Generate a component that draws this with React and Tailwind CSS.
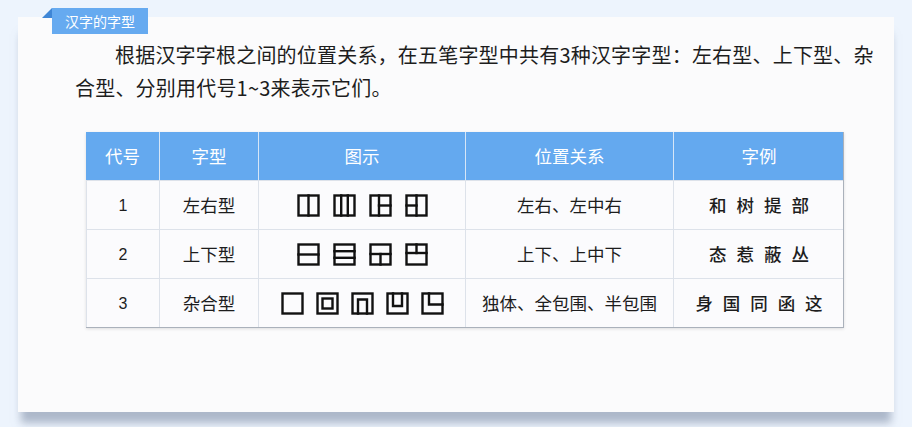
const font = { fontFamily: '"Noto Sans CJK SC", "Noto Sans", sans-serif' };

const Box = ({ children }) => (
  <svg width="23" height="23" viewBox="0 0 23 23" fill="none" stroke="#111" strokeWidth="2.4" strokeLinecap="square">
    <rect x="1.5" y="1.5" width="20" height="20" />
    {children}
  </svg>
);

const icons = {
  1: [
    <Box key="a"><line x1="11.5" y1="1.5" x2="11.5" y2="21.5" /></Box>,
    <Box key="b"><line x1="8.2" y1="1.5" x2="8.2" y2="21.5" /><line x1="14.8" y1="1.5" x2="14.8" y2="21.5" /></Box>,
    <Box key="c"><line x1="10" y1="1.5" x2="10" y2="21.5" /><line x1="10" y1="11.5" x2="21.5" y2="11.5" /></Box>,
    <Box key="d"><line x1="11.5" y1="1.5" x2="11.5" y2="21.5" /><line x1="1.5" y1="11.5" x2="11.5" y2="11.5" /></Box>,
  ],
  2: [
    <Box key="a"><line x1="1.5" y1="11.5" x2="21.5" y2="11.5" /></Box>,
    <Box key="b"><line x1="1.5" y1="8.2" x2="21.5" y2="8.2" /><line x1="1.5" y1="14.8" x2="21.5" y2="14.8" /></Box>,
    <Box key="c"><line x1="1.5" y1="11" x2="21.5" y2="11" /><line x1="11.5" y1="11" x2="11.5" y2="21.5" /></Box>,
    <Box key="d"><line x1="1.5" y1="10" x2="21.5" y2="10" /><line x1="11.5" y1="1.5" x2="11.5" y2="10" /></Box>,
  ],
  3: [
    <Box key="a" />,
    <Box key="b"><rect x="6.5" y="6.5" width="10" height="10" /></Box>,
    <Box key="c"><polyline points="7,21.5 7,7.5 16,7.5 16,21.5" /></Box>,
    <Box key="d"><polyline points="7,1.5 7,14 16,14 16,1.5" /></Box>,
    <Box key="e"><polyline points="8,1.5 8,12.5 21.5,12.5" /></Box>,
  ],
};

const rows = [
  { no: '1', type: '左右型', rel: '左右、左中右', ex: '和 树 提 部' },
  { no: '2', type: '上下型', rel: '上下、上中下', ex: '态 惹 蔽 丛' },
  { no: '3', type: '杂合型', rel: '独体、全包围、半包围', ex: '身 国 同 函 这' },
];

const cols = 'grid grid-cols-[73px_99px_207px_208px_171px]';

export default function App() {
  return (
    <div className="w-[912px] h-[427px] bg-[#edf4fd] pt-[17px] pl-[18px] overflow-hidden" style={font}>
      <div className="relative w-[876px] h-[395px] bg-[#fbfbfc] shadow-[0_14px_8px_-3px_rgba(120,135,160,0.55)] pt-[21px] pl-[57px] pr-[6px]">
        <div className="absolute left-[24px] top-[-9px] flex">
          <div className="w-0 h-0 border-l-[10px] border-l-transparent border-b-[10px] border-b-[#3f86d6] self-start" />
          <div className="h-[26px] w-[96px] bg-[#66aaf0] text-white text-[14px] leading-[26px] text-center">汉字的字型</div>
        </div>

        <p className="text-[20px] leading-[33px] tracking-[0.2px] text-[#1d1d1d] indent-[40px]">
          根据汉字字根之间的位置关系，在五笔字型中共有3种汉字字型：左右型、上下型、杂合型、分别用代号1~3来表示它们。
        </p>

        <div className="mt-[28px] ml-[11px] w-[758px] border-r border-b border-[#aab1bb] shadow-[0_1px_3px_rgba(0,0,0,0.12)]">
          <div className={`${cols} h-[48px] bg-[#64a9ef] text-white text-[17.5px]`}>
            {['代号', '字型', '图示', '位置关系', '字例'].map((h, i) => (
              <div key={h} className={`flex items-center justify-center ${i > 0 ? 'border-l border-[#d6e6f7]' : ''}`}>{h}</div>
            ))}
          </div>
          {rows.map((r, ri) => (
            <div key={r.no} className={`${cols} h-[49px] text-[17.5px] text-[#1d1d1d] bg-[#fbfbfd] border-t border-[#dde2ea]`}>
              <div className="flex items-center justify-center border-l border-[#dde2ea] pt-[2px]" style={{ fontFamily: '"Liberation Sans", sans-serif', fontSize: '16px' }}>{r.no}</div>
              <div className="flex items-center justify-center border-l border-[#dde2ea]">{r.type}</div>
              <div className={`flex items-center justify-center border-l border-[#dde2ea] ${ri === 2 ? 'gap-[12px]' : 'gap-[13px]'}`}>
                {icons[r.no]}
              </div>
              <div className="flex items-center justify-center border-l border-[#dde2ea]">{r.rel}</div>
              <div className="flex items-center justify-center border-l border-[#dde2ea] font-medium tracking-[3px] pl-[3px]">{r.ex}</div>
            </div>
          ))}
        </div>
      </div>
    </div>
  );
}
